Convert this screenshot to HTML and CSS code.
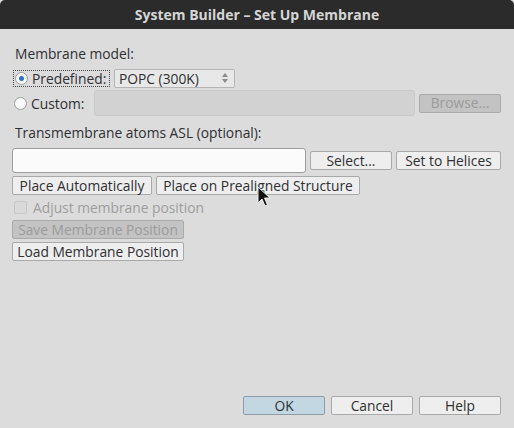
FILE: index.html
```html
<!DOCTYPE html>
<html>
<head>
<meta charset="utf-8">
<link rel="stylesheet" href="styles.css">
</head>
<body>
<div class="window">
  <div class="titlebar">System Builder – Set Up Membrane</div>
  <div class="content">
    <div class="label l-model">Membrane model:</div>
    <div class="row r-pre">
      <div class="focus">
        <span class="radio checked"></span>
        <span class="rtext">Predefined:</span>
      </div>
      <div class="combo">
        <span>POPC (300K)</span>
        <svg class="spin" width="8" height="12" viewBox="0 0 8 12"><path d="M4 1 L7 5 L1 5 Z" fill="#8a8a8a"/><path d="M4 11 L7 7 L1 7 Z" fill="#8a8a8a"/></svg>
      </div>
    </div>
    <div class="row r-custom">
      <div class="radiolab">
        <span class="radio"></span>
        <span class="rtext">Custom:</span>
      </div>
      <div class="field disabled"></div>
      <div class="btn dis b-browse">Browse...</div>
    </div>
    <div class="label l-asl">Transmembrane atoms ASL (optional):</div>
    <div class="row r-asl">
      <div class="field input"></div>
      <div class="btn b-select">Select...</div>
      <div class="btn b-helices">Set to Helices</div>
    </div>
    <div class="row r-place">
      <div class="btn b-auto">Place Automatically</div>
      <div class="btn b-prealign">Place on Prealigned Structure</div>
    </div>
    <div class="row r-check">
      <span class="check"></span>
      <span class="dtext">Adjust membrane position</span>
    </div>
    <div class="row r-save">
      <div class="btn dis b-pos">Save Membrane Position</div>
    </div>
    <div class="row r-load">
      <div class="btn b-pos">Load Membrane Position</div>
    </div>
    <div class="spacer"></div>
    <div class="row r-bottom">
      <div class="btn ok b-foot">OK</div>
      <div class="btn b-foot">Cancel</div>
      <div class="btn b-foot">Help</div>
    </div>
  </div>
  <svg class="cursor" width="14" height="22" viewBox="0 0 14 22"><path d="M1 1 L1 17 L5 13 L8 20 L10.5 19 L7.5 12 L13 12 Z" fill="#111" stroke="#eee" stroke-width="1"/></svg>
</div>
</body>
</html>
```

FILE: styles.css
```css
* { box-sizing: border-box; }
html, body { margin: 0; padding: 0; }
body {
  width: 514px;
  height: 428px;
  overflow: hidden;
  font-family: "Open Sans", "DejaVu Sans", sans-serif;
  font-size: 13.8px;
  color: #2e3033;
}
.window {
  position: relative;
  width: 514px;
  height: 428px;
  background: #dcdcdc;
  display: flex;
  flex-direction: column;
}
.titlebar {
  height: 29px;
  background: #2b2b2b;
  color: #d6d6d6;
  font-weight: bold;
  font-size: 14px;
  text-align: center;
  line-height: 30px;
  border-radius: 5px 5px 0 0;
}
.content {
  flex: 1;
  display: flex;
  flex-direction: column;
  padding: 0 13px 13px 12px;
}
.label { line-height: 16px; padding-left: 3px; }
.l-model { margin-top: 17px; }
.row { display: flex; align-items: center; }
.r-pre { margin-top: 6px; height: 20px; }
.focus {
  display: flex;
  align-items: center;
  height: 17px;
  width: 97px;
  border: 1px dotted #444;
  margin-left: 1px;
  padding-left: 1px;
}
.radio {
  width: 13px;
  height: 13px;
  border-radius: 50%;
  border: 1px solid #9c9c9c;
  background: #fafafa;
  display: inline-block;
  position: relative;
  flex: none;
}
.radio.checked::after {
  content: "";
  position: absolute;
  left: 3px;
  top: 3px;
  width: 5px;
  height: 5px;
  border-radius: 50%;
  background: #2a77c9;
}
.rtext { margin-left: 4px; }
.combo {
  margin-left: 4px;
  width: 121px;
  height: 19px;
  border: 1px solid #b5b5b5;
  border-radius: 2px;
  background: #e8e8e8;
  display: flex;
  align-items: center;
  justify-content: space-between;
  padding: 0 5px 0 4px;
}
.r-custom { margin-top: 2px; height: 26px; }
.radiolab { display: flex; align-items: center; width: 82px; padding-left: 2px; }
.field {
  height: 26px;
  border-radius: 3px;
}
.field.disabled {
  flex: 1;
  background: #d2d2d2;
  border: 1px solid #cacaca;
}
.btn {
  height: 19px;
  border: 1px solid #a9a9a9;
  border-radius: 2px;
  background: #eeeeee;
  display: flex;
  align-items: center;
  justify-content: center;
  line-height: 1;
  white-space: nowrap;
}
.btn.dis {
  background: #c3c3c3;
  color: #9b9b9b;
  border-color: #aaaaaa;
}
.b-browse { width: 82px; margin-left: 4px; }
.l-asl { margin-top: 9px; }
.r-asl { margin-top: 7px; height: 25px; }
.field.input {
  width: 294px;
  height: 25px;
  background: #fbfbfb;
  border: 1px solid #9d9d9d;
}
.b-select { width: 82px; margin-left: 4px; }
.b-helices { flex: 1; margin-left: 4px; }
.r-place { margin-top: 3px; }
.b-auto { width: 140px; }
.b-prealign { width: 204px; margin-left: 4px; }
.r-check { margin-top: 5px; height: 14px; padding-left: 2px; }
.check {
  width: 13px;
  height: 13px;
  border: 1px solid #c6c6c6;
  border-radius: 2px;
  background: #d9d9d9;
}
.dtext { color: #9e9e9e; margin-left: 6px; }
.r-save { margin-top: 6px; }
.r-load { margin-top: 3px; }
.b-pos { width: 172px; }
.spacer { flex: 1; }
.r-bottom { justify-content: flex-end; gap: 6px; }
.b-foot { width: 82px; }
.btn.ok { background: #c3d7e3; border-color: #8e9ea8; }
.cursor { position: absolute; left: 257px; top: 186px; }
```
